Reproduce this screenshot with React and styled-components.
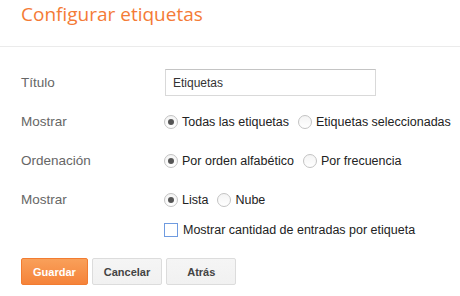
import React from 'react'
import styled, { createGlobalStyle } from 'styled-components'

const Global = createGlobalStyle`
  html, body { margin: 0; padding: 0; background: #fff; }
  body { font-family: "Liberation Sans", Arial, sans-serif; }
`

const Page = styled.div`
  width: 460px;
  height: 296px;
  overflow: hidden;
`

const Header = styled.div`
  height: 47px;
  border-bottom: 1px solid #ebebeb;
  padding: 1px 0 0 21px;
  box-sizing: border-box;
`

const Title = styled.h1`
  margin: 0;
  font-family: "Open Sans", sans-serif;
  font-weight: 400;
  font-size: 19px;
  line-height: 26px;
  color: #f47b36;
`

const Form = styled.div`
  display: grid;
  grid-template-columns: 143px 1fr;
  grid-template-rows: 39px 39px 39px 39px 21px;
  padding: 16px 0 0 21px;
`

const Label = styled.div`
  display: flex;
  align-items: center;
  font-size: 13.5px;
  color: #666;
`

const Field = styled.div`
  display: flex;
  align-items: center;
  gap: 9px;
  grid-column: ${p => (p.$wide ? '2' : 'auto')};
`

const Input = styled.input`
  width: 211px;
  height: 27px;
  box-sizing: border-box;
  border: 1px solid #d9d9d9;
  border-top-color: #c4c4c4;
  padding: 0 7px;
  font-family: "Liberation Sans", Arial, sans-serif;
  font-size: 12px;
  color: #333;
  outline: none;
  margin-left: 1px;
`

const Option = styled.label`
  display: flex;
  align-items: center;
  gap: 4px;
  font-size: 12.5px;
  color: #222;
`

const Radio = styled.span`
  width: 14px;
  height: 14px;
  box-sizing: border-box;
  border-radius: 50%;
  border: 1px solid #c3c3c3;
  background: linear-gradient(#f4f4f4, #fff);
  display: flex;
  align-items: center;
  justify-content: center;
  &::after {
    content: '';
    width: 6px;
    height: 6px;
    border-radius: 50%;
    background: #555;
    display: ${p => (p.$on ? 'block' : 'none')};
  }
`

const Check = styled.span`
  width: 12px;
  height: 12px;
  border: 1px solid #6f9be0;
  background: #fff;
  margin-right: 1px;
`

const Buttons = styled.div`
  display: flex;
  gap: 4px;
  padding: 18px 0 0 21px;
`

const Button = styled.button`
  height: 27px;
  min-width: 70px;
  box-sizing: border-box;
  padding: 0 11px;
  border-radius: 2px;
  font-family: "Liberation Sans", Arial, sans-serif;
  font-size: 11px;
  font-weight: bold;
  cursor: pointer;
  color: ${p => (p.$primary ? '#fff' : '#444')};
  border: 1px solid ${p => (p.$primary ? '#f27c31' : '#dcdcdc')};
  background: ${p =>
    p.$primary
      ? 'linear-gradient(#f9a05a, #f5833a)'
      : 'linear-gradient(#f5f5f5, #f1f1f1)'};
  ${p => p.$primary && 'min-width: 0;'}
`

function RadioOption({ on, children }) {
  return (
    <Option>
      <Radio $on={on} />
      {children}
    </Option>
  )
}

export default function App() {
  return (
    <Page>
      <Global />
      <Header>
        <Title>Configurar etiquetas</Title>
      </Header>
      <Form>
        <Label>Título</Label>
        <Field>
          <Input defaultValue="Etiquetas" />
        </Field>

        <Label>Mostrar</Label>
        <Field>
          <RadioOption on>Todas las etiquetas</RadioOption>
          <RadioOption>Etiquetas seleccionadas</RadioOption>
        </Field>

        <Label>Ordenación</Label>
        <Field>
          <RadioOption on>Por orden alfabético</RadioOption>
          <RadioOption>Por frecuencia</RadioOption>
        </Field>

        <Label>Mostrar</Label>
        <Field>
          <RadioOption on>Lista</RadioOption>
          <RadioOption>Nube</RadioOption>
        </Field>

        <Field $wide>
          <Option>
            <Check />
            Mostrar cantidad de entradas por etiqueta
          </Option>
        </Field>
      </Form>
      <Buttons>
        <Button $primary>Guardar</Button>
        <Button>Cancelar</Button>
        <Button>Atrás</Button>
      </Buttons>
    </Page>
  )
}
